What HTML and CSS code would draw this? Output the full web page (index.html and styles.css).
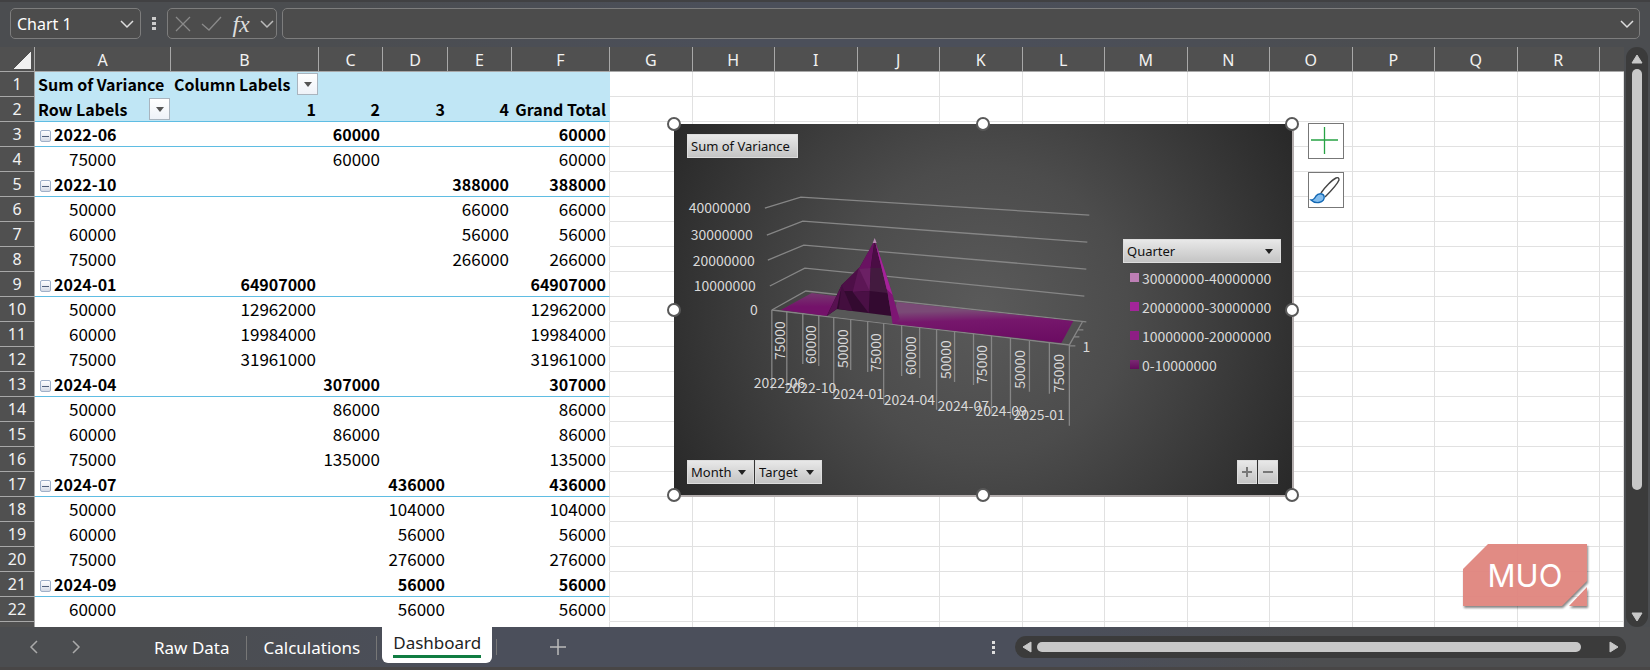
FILE: index.html
```
<!DOCTYPE html>
<html lang="en">
<head>
    <meta charset="UTF-8">
    <meta name="viewport" content="width=device-width, initial-scale=1.0">
    <title>Variance Dashboard</title>
    <link rel="stylesheet" href="styles.css">
</head>
<body>
    <header class="formula-bar">
        <div class="box name-box">
            <input type="text" class="name-input" value="Chart 1" aria-label="Name box">
            <button class="plain" aria-label="Open name list">
                <svg width="16" height="10" viewBox="0 0 16 10"><path d="M2 2l6 6 6-6" fill="none" stroke="#ddd" stroke-width="1.5"/></svg>
            </button>
        </div>
        <svg class="grip" width="4" height="13" viewBox="0 0 4 13" fill="#ccc"><path d="M0 0h4v3H0zM0 5h4v3H0zM0 10h4v3H0z"/></svg>
        <div class="box fx-box">
            <button class="plain" aria-label="Cancel">
                <svg width="16" height="16" viewBox="0 0 16 16"><path d="M1 1l14 14M15 1L1 15" stroke="#8a8a8a" stroke-width="1.3"/></svg>
            </button>
            <button class="plain" aria-label="Enter">
                <svg width="21" height="16" viewBox="0 0 21 16"><path d="M1 8l7 6L20 1" fill="none" stroke="#8a8a8a" stroke-width="1.3"/></svg>
            </button>
            <button class="plain fx" aria-label="Insert function">fx</button>
            <button class="plain" aria-label="Function list">
                <svg width="14" height="10" viewBox="0 0 14 10"><path d="M1 2l6 6 6-6" fill="none" stroke="#bbb" stroke-width="1.5"/></svg>
            </button>
        </div>
        <div class="box formula-box">
            <input type="text" class="formula-input" aria-label="Formula">
            <button class="plain" aria-label="Expand formula bar">
                <svg width="14" height="10" viewBox="0 0 14 10"><path d="M1 2l6 6 6-6" fill="none" stroke="#ddd" stroke-width="1.5"/></svg>
            </button>
        </div>
    </header>

    <main class="workspace">
        <div class="sheet">
            <table class="grid">
                <colgroup>
                    <col class="col-num"><col class="col-a"><col class="col-b"><col class="col-n"><col class="col-d"><col class="col-n"><col class="col-f">
                    <col><col><col><col><col><col><col><col><col><col><col><col><col class="col-last">
                </colgroup>
                <thead>
                    <tr id="columnLetters"></tr>
                </thead>
                <tbody id="gridRows"></tbody>
            </table>

            <!-- Pivot chart floating over the cells -->
            <section class="chart" aria-label="Pivot chart">
                <svg class="plot" viewBox="674 124 619 371">
                    <defs>
                        <linearGradient id="carpet" x1="0" y1="0" x2="0.12" y2="1">
                            <stop offset="0.25" stop-color="#7a4a76"/>
                            <stop offset="0.5" stop-color="#76176c"/>
                            <stop offset="1" stop-color="#6c0d63"/>
                        </linearGradient>
                        <linearGradient id="carpetLeft" x1="0" y1="0" x2="0" y2="1">
                            <stop offset="0" stop-color="#76386f"/>
                            <stop offset="0.6" stop-color="#74126a"/>
                        </linearGradient>
                    </defs>
                    <g class="lines">
                        <path d="M765 208L801 197L1090 215M767 235L803 221L1088 242M768 260L804 245L1087 269M770 286L805 268L1085 296M772 310L806 291L1087 322"/>
                        <path d="M772 310L1070 345L1083 322M1078 330h6M1074 337h6M1070 346h6"/>
                    </g>
                    <path d="M781 310L812 293L842 297L827 316z" fill="url(#carpetLeft)"/>
                    <path d="M893 324L897 302L1074 321L1062 343z" fill="url(#carpet)"/>
                    <path d="M827 316L837 309L892 316L893 324z" fill="#575757"/>
                    <path d="M827 316L842 285L859 269L875 241L882 268L888 293L892 316L837 309z" fill="#330a30"/>
                    <path d="M827 316L842 285L837 309z" fill="#571150"/>
                    <path d="M842 285L859 268L871 268L870 291L839 291z" fill="#4d0f47"/>
                    <path d="M859 268L853 292L870 291L871 268z" fill="#5c1655"/>
                    <path d="M859 268L870 291L871 268z" fill="#6b2064"/>
                    <path d="M859 269L875 240L871 268z" fill="#691261"/>
                    <path d="M875 240L871 268L882 268z" fill="#4a0d44"/>
                    <path d="M871 268L882 268L888 293L870 291z" fill="#431a3f"/>
                    <path d="M842 285L853 311L839 309z" fill="#430e3e"/>
                    <path d="M853 292L869 313L870 291z" fill="#4a1045"/>
                    <path d="M875 240L885 270L893 295L900 319L893 324L888 293L882 268z" fill="#7d1573"/>
                    <path d="M875 240L885 270L893 295L887 289L881 264z" fill="#a5239a"/>
                    <path d="M875 238L877 243H873z" fill="#b58ab1"/>
                    <g class="lines">
                        <path d="M772 310V390M787 312V390M803 314V364M819 316V366M834 317V396M851 319V370M868 321V372M884 323V404M902 325V376M920 328V378M937 330V410M955 332V382M974 334V385M992 336V414M1011 338V419M1030 341V392M1050 343V394M1070 345V426"/>
                    </g>
                    <g class="axis axis-value">
                        <text x="751" y="213">40000000</text>
                        <text x="753" y="240">30000000</text>
                        <text x="755" y="266">20000000</text>
                        <text x="756" y="291">10000000</text>
                        <text x="758" y="315">0</text>
                        <text x="1091" y="352">1</text>
                    </g>
                    <g class="axis" id="targetLabels"></g>
                    <g class="axis">
                        <text x="754" y="388">2022-06</text>
                        <text x="785" y="393">2022-10</text>
                        <text x="833" y="399">2024-01</text>
                        <text x="884" y="405">2024-04</text>
                        <text x="938" y="411">2024-07</text>
                        <text x="976" y="416">2024-09</text>
                        <text x="1014" y="420">2025-01</text>
                    </g>
                </svg>
                <div class="chart-top">
                    <button class="field">Sum of Variance</button>
                </div>
                <div class="legend">
                    <select class="field legend-field" aria-label="Quarter"><option>Quarter</option></select>
                    <ul class="legend-list">
                        <li><span class="swatch s4"></span>30000000-40000000</li>
                        <li><span class="swatch s3"></span>20000000-30000000</li>
                        <li><span class="swatch s2"></span>10000000-20000000</li>
                        <li><span class="swatch s1"></span>0-10000000</li>
                    </ul>
                </div>
                <div class="chart-bottom">
                    <select class="field" aria-label="Month"><option>Month</option></select>
                    <select class="field" aria-label="Target"><option>Target</option></select>
                    <button class="field zoom-field first" aria-label="Expand field">
                        <svg width="10" height="10" viewBox="0 0 10 10"><path d="M0 5h10M5 0v10" stroke="#777" stroke-width="2"/></svg>
                    </button>
                    <button class="field zoom-field" aria-label="Collapse field">
                        <svg width="10" height="10" viewBox="0 0 10 10"><path d="M0 5h10" stroke="#777" stroke-width="2"/></svg>
                    </button>
                </div>
                <span class="handle top left"></span>
                <span class="handle top center"></span>
                <span class="handle top right"></span>
                <span class="handle middle left"></span>
                <span class="handle middle right"></span>
                <span class="handle bottom left"></span>
                <span class="handle bottom center"></span>
                <span class="handle bottom right"></span>
                <div class="chart-tools">
                    <button class="tool" aria-label="Chart elements">
                        <svg width="34" height="34" viewBox="0 0 34 34"><path d="M2 16h27M15.500 3v27" stroke="#27a344" stroke-width="1.3"/></svg>
                    </button>
                    <button class="tool" aria-label="Chart styles">
                        <svg width="34" height="34" viewBox="0 0 34 34">
                            <path d="M12 20C16 14 23 7 27 5c2-1 3 0 3 2c-2 5-8 11-14 17" fill="#fff" stroke="#444" stroke-width="1.4"/>
                            <path d="M2 27c3 0 4-2 5-4c2-3 7-3 8 0c1 3-1 6-5 6.500c-3 .5-6-.5-8-2.500z" fill="#83bdee" stroke="#1368b3" stroke-width="1.4"/>
                        </svg>
                    </button>
                </div>
            </section>

            <div class="watermark">
                <svg class="watermark-shape" viewBox="0 0 124 62"><path d="M0 25L25 0H124V37L99 62H0zM124 43V62H106z" fill="#e0857e"/></svg>
                <span class="watermark-text">MUO</span>
            </div>
        </div>
        <div class="scroll scroll-y">
            <svg width="12" height="10" viewBox="0 0 12 10"><path d="M6 1l5 8H1z" fill="#c8c8c8" stroke="#c8c8c8" stroke-linejoin="round"/></svg>
            <div class="thumb-y"></div>
            <svg width="12" height="10" viewBox="0 0 12 10"><path d="M6 9L1 1h10z" fill="#c8c8c8" stroke="#c8c8c8" stroke-linejoin="round"/></svg>
        </div>
    </main>

    <footer class="tab-bar">
        <div class="tab-arrows">
            <button class="plain" aria-label="Previous sheet">
                <svg width="10" height="14" viewBox="0 0 10 14"><path d="M8 1L2 7l6 6" fill="none" stroke="#aaa" stroke-width="1.5"/></svg>
            </button>
            <button class="plain" aria-label="Next sheet">
                <svg width="10" height="14" viewBox="0 0 10 14"><path d="M2 1l6 6-6 6" fill="none" stroke="#aaa" stroke-width="1.5"/></svg>
            </button>
        </div>
        <nav class="tabs">
            <button class="tab">Raw Data</button>
            <button class="tab">Calculations</button>
            <button class="tab active"><span>Dashboard</span></button>
        </nav>
        <button class="plain add-tab" aria-label="New sheet">
            <svg width="16" height="16" viewBox="0 0 16 16"><path d="M0 8h16M8 0v16" stroke="#bbb" stroke-width="1.5"/></svg>
        </button>
        <svg class="tab-grip" width="3" height="13" viewBox="0 0 3 13" fill="#ddd"><path d="M0 0h3v3H0zM0 5h3v3H0zM0 10h3v3H0z"/></svg>
        <div class="scroll scroll-x">
            <svg width="10" height="12" viewBox="0 0 10 12"><path d="M1 6l8-5v10z" fill="#c8c8c8" stroke="#c8c8c8" stroke-linejoin="round"/></svg>
            <div class="thumb-x"></div>
            <svg width="10" height="12" viewBox="0 0 10 12"><path d="M9 6L1 1v10z" fill="#c8c8c8" stroke="#c8c8c8" stroke-linejoin="round"/></svg>
        </div>
    </footer>

    <script>
        const letters = 'ABCDEFGHIJKLMNOPQR'.split('');

        // label, value, quarter (1-4 = columns B-E); months are the group rows
        const rows = [
            ['2022-06', 60000, 2], ['75000', 60000, 2],
            ['2022-10', 388000, 4], ['50000', 66000, 4], ['60000', 56000, 4], ['75000', 266000, 4],
            ['2024-01', 64907000, 1], ['50000', 12962000, 1], ['60000', 19984000, 1], ['75000', 31961000, 1],
            ['2024-04', 307000, 2], ['50000', 86000, 2], ['60000', 86000, 2], ['75000', 135000, 2],
            ['2024-07', 436000, 3], ['50000', 104000, 3], ['60000', 56000, 3], ['75000', 276000, 3],
            ['2024-09', 56000, 3], ['60000', 56000, 3]
        ];

        const emptyCells = '<td></td>'.repeat(13);
        const filterButton = name => `<button class="filter" aria-label="Filter ${name}"></button>`;

        document.getElementById('columnLetters').innerHTML =
            '<th class="corner"></th>' + letters.map(l => `<th>${l}</th>`).join('') + '<th></th>';

        let html = `
            <tr class="head"><th>1</th><td class="pivot label">Sum of Variance</td><td class="pivot label"><div class="with-filter">Column Labels${filterButton('columns')}</div></td><td class="pivot"></td><td class="pivot"></td><td class="pivot"></td><td class="pivot last"></td>${emptyCells}</tr>
            <tr class="head group"><th>2</th><td class="pivot label"><div class="with-filter">Row Labels${filterButton('rows')}</div></td><td class="pivot">1</td><td class="pivot">2</td><td class="pivot">3</td><td class="pivot">4</td><td class="pivot last">Grand Total</td>${emptyCells}</tr>`;

        rows.forEach(([label, value, quarter], i) => {
            const isGroup = label.includes('-');
            const toggle = isGroup ? '<button class="toggle" aria-label="Collapse"></button>' : '';
            let cells = '';
            for (let q = 1; q <= 4; q++) {
                cells += `<td class="pivot">${q === quarter ? value : ''}</td>`;
            }
            html += `<tr class="${isGroup ? 'group' : 'item'}"><th>${i + 3}</th><td class="pivot label">${toggle}${label}</td>${cells}<td class="pivot last">${value}</td>${emptyCells}</tr>`;
        });
        html += `<tr><th></th>${'<td class="pivot"></td>'.repeat(5)}<td class="pivot last"></td>${emptyCells}</tr>`;
        document.getElementById('gridRows').innerHTML = html;

        const targets = [
            [785, 360, '75000'], [816, 364, '60000'], [848, 368, '50000'], [881, 372, '75000'], [916, 375, '60000'],
            [951, 379, '50000'], [988, 384, '75000'], [1026, 389, '50000'], [1065, 393, '75000']
        ];
        document.getElementById('targetLabels').innerHTML =
            targets.map(([x, y, t]) => `<text transform="translate(${x} ${y}) rotate(-90)">${t}</text>`).join('');
    </script>
</body>
</html>
```
FILE: styles.css
```
/* General */
* {
    box-sizing: border-box;
}
body {
    margin: 0;
    height: 100vh;
    display: flex;
    flex-direction: column;
    overflow: hidden;
    background: #4b4d50;
    font-family: "Noto Sans CJK SC", "Noto Sans", sans-serif;
    font-size: 17px;
}
button, input, select {
    font: inherit;
    color: inherit;
    margin: 0;
    padding: 0;
    border: none;
    background: none;
    outline: none;
}
svg {
    display: block;
}
.plain {
    flex: none;
    cursor: pointer;
}

/* Formula bar */
.formula-bar {
    flex: none;
    height: 47px;
    padding: 6px 10px 8px;
    display: flex;
    align-items: center;
    background: linear-gradient(90deg, #4b4d50 20%, #4b4f5a 45%, #4b4f5a 60%, #4b4d50 85%);
    border-top: 2px solid #414143;
    color: #fff;
}
.box {
    height: 31px;
    display: flex;
    align-items: center;
    border: 1px solid #7d7d7d;
    border-radius: 5px;
    background: #4c4c4c;
}
.name-box {
    width: 131px;
    padding: 0 5px 0 6px;
}
.name-input {
    flex: 1;
    min-width: 0;
    font-family: "Noto Sans", sans-serif;
    font-size: 16px;
}
.grip {
    margin: 0 11px;
}
.fx-box {
    width: 110px;
    padding: 0 2px 0 7px;
    justify-content: space-between;
}
.fx {
    font-family: "Liberation Serif", serif;
    font-style: italic;
    font-size: 24px;
    line-height: 26px;
    color: #ddd;
}
.formula-box {
    flex: 1;
    margin-left: 5px;
    padding: 0 5px;
}
.formula-input {
    flex: 1;
}

/* Sheet */
.workspace {
    flex: 1;
    min-height: 0;
    display: flex;
}
.sheet {
    position: relative;
    flex: 1;
    overflow: hidden;
    background: #fff;
}
.grid {
    width: 100%;
    table-layout: fixed;
    border-collapse: separate;
    border-spacing: 0;
    line-height: 24px;
}
.col-num { width: 35px; }
.col-a { width: 136px; }
.col-b { width: 148px; }
.col-n { width: 64px; }
.col-d { width: 65px; }
.col-f { width: 98px; }
.col-last { width: 24px; }
.grid th {
    padding: 0;
    background: #505050;
    color: #f2f2f2;
    font-family: "Noto Sans", sans-serif;
    font-size: 16px;
    font-weight: normal;
    border-right: 1px solid #a8a8a8;
    border-bottom: 1px solid #a8a8a8;
}
.grid thead th {
    height: 25px;
    padding-top: 2px;
    line-height: 22px;
}
.grid thead th:last-child {
    border-right: none;
}
.grid .corner {
    background: linear-gradient(135deg, #505050 50%, #f0f0f0 50%) 13px 4px / 18px 18px no-repeat #505050;
}
.grid td {
    height: 25px;
    padding: 0 3px;
    border-right: 1px solid #e1e1e1;
    border-bottom: 1px solid #e1e1e1;
    text-align: right;
    white-space: nowrap;
}
.grid .pivot {
    border-right: none;
    border-bottom-color: #fff;
}
.grid .last {
    border-right: 1px solid #e1e1e1;
}
.grid .label {
    text-align: left;
}
.head td.pivot {
    background: #c0e6f5;
    border-color: #c0e6f5;
}
.head td, .group td {
    font-size: 16px;
    font-weight: bold;
}
.group td.pivot {
    border-bottom-color: #5fbde3;
}
.item .label {
    padding-left: 34px;
}
.group:not(.head) .label {
    padding-left: 5px;
}
.with-filter {
    display: flex;
    align-items: center;
    justify-content: space-between;
    margin-right: -2px;
}
.filter {
    width: 21px;
    height: 22px;
    border: 1px solid #a9b4be;
    background: linear-gradient(#fff, #eef2f8);
    display: flex;
    align-items: center;
    justify-content: center;
}
.filter::after {
    content: "";
    border: 4px solid transparent;
    border-top: 5px solid #555;
    border-bottom: none;
}
.toggle {
    width: 11px;
    height: 12px;
    margin-right: 3px;
    border: 1px solid #9fb0c8;
    border-radius: 2px;
    background: linear-gradient(#51617c, #51617c) center / 7px 1px no-repeat, linear-gradient(#fff, #d5dbe6);
}

/* Chart */
.chart {
    position: absolute;
    left: 674px;
    top: 77px;
    width: 618px;
    height: 371px;
    padding: 10px 14px 11px 13px;
    display: flex;
    flex-direction: column;
    justify-content: space-between;
    background: radial-gradient(circle at 50% 50%, #5a5a5a 0%, #4c4c4c 40%, #282828 100%);
    box-shadow: 1px 1px 0 1px #b3adad;
    font-size: 14px;
    color: #d9d9d9;
}
.plot {
    position: absolute;
    inset: 0;
    width: 100%;
    height: 100%;
}
.lines path {
    fill: none;
    stroke: #868686;
    stroke-width: 1.3;
}
.axis {
    fill: #d9d9d9;
    font-size: 14px;
}
.axis-value {
    text-anchor: end;
}
.chart-top, .chart-bottom {
    position: relative;
    display: flex;
    gap: 1px;
}
.field {
    height: 24px;
    padding: 0 3px;
    border: 1px solid #ddd;
    background: linear-gradient(#e8e8e8, #c4c4c4);
    color: #111;
    font-family: "Noto Sans", sans-serif;
    font-size: 13px;
    line-height: 20px;
}
.chart-top .field {
    width: 111px;
    text-align: left;
    white-space: nowrap;
}
select.field {
    width: 67px;
    appearance: none;
    background: url("data:image/svg+xml,%3Csvg xmlns='http://www.w3.org/2000/svg' width='8' height='5'%3E%3Cpath d='M0 0h8L4 5z' fill='%23222'/%3E%3C/svg%3E") right 7px center no-repeat, linear-gradient(#e8e8e8, #c4c4c4);
}
.legend {
    position: absolute;
    right: 11px;
    top: 115px;
    width: 158px;
}
.legend .legend-field {
    display: block;
    width: 100%;
}
.legend-list {
    list-style: none;
    margin: 0;
    padding: 0 0 0 7px;
}
.legend-list li {
    display: flex;
    align-items: center;
    gap: 3px;
    height: 29px;
    white-space: nowrap;
}
.swatch {
    width: 9px;
    height: 9px;
}
.s4 { background: #bd7fb5; }
.s3 { background: #a3259a; }
.s2 { background: #8e1e85; }
.s1 { background: linear-gradient(#7a2a73, #640b5c); }
.zoom-field {
    width: 20px;
    display: flex;
    align-items: center;
    justify-content: center;
}
.zoom-field.first {
    margin-left: auto;
}
.handle {
    position: absolute;
    width: 14px;
    height: 14px;
    border: 2px solid #595959;
    border-radius: 50%;
    background: #fff;
    transform: translate(-50%, -50%);
}
.handle.top { top: 0; }
.handle.middle { top: 50%; }
.handle.bottom { top: 100%; }
.handle.left { left: 0; }
.handle.center { left: 50%; }
.handle.right { left: 100%; }
.chart-tools {
    position: absolute;
    left: 100%;
    top: -1px;
    margin-left: 16px;
    display: grid;
    gap: 13px;
}
.tool {
    width: 36px;
    height: 36px;
    border: 1px solid #777;
    background: #fff;
}

/* Watermark */
.watermark {
    position: absolute;
    right: 37px;
    bottom: 21px;
    width: 124px;
    height: 62px;
    display: flex;
    align-items: center;
    justify-content: center;
}
.watermark-shape {
    position: absolute;
    inset: 0;
    opacity: 0.95;
    filter: drop-shadow(1px 2px 1px rgba(0, 0, 0, 0.5));
}
.watermark-text {
    position: relative;
    font-family: Inter, sans-serif;
    font-size: 31px;
    font-weight: 400;
    color: #fff;
}

/* Scrollbars */
.scroll {
    background: #3b3b3b;
    border-radius: 11px;
    display: flex;
    align-items: center;
}
.scroll-y {
    flex: none;
    width: 22px;
    margin: 0 2px;
    padding: 7px 0 5px;
    flex-direction: column;
    justify-content: space-between;
}
.thumb-y {
    width: 10px;
    flex: 1;
    margin: 5px 0 122px;
    border-radius: 5px;
    background: #c8c8c8;
}
.scroll-x {
    flex: none;
    width: 611px;
    height: 22px;
    padding: 0 7px;
}
.thumb-x {
    flex: 1;
    height: 10px;
    margin: 0 28px 0 5px;
    border-radius: 5px;
    background: #c8c8c8;
}

/* Sheet tabs */
.tab-bar {
    flex: none;
    height: 43px;
    padding: 0 24px 0 29px;
    display: flex;
    align-items: center;
    background: linear-gradient(90deg, #4b4d50 10%, #4b4f5b 28%, #4b4f5b 65%, #4d4e50 80%);
    border-bottom: 3px solid #484646;
    color: #fff;
    font-family: "Noto Sans", sans-serif;
}
.tab-arrows {
    display: flex;
    gap: 32px;
}
.tabs {
    display: flex;
    align-self: stretch;
    margin-left: 56px;
}
.tab {
    height: 36px;
    padding: 6px 17px 0;
    position: relative;
    line-height: 28px;
}
.tab:not(.active)::after {
    content: "";
    position: absolute;
    right: 0;
    top: 9px;
    height: 24px;
    border-right: 1px solid #777;
}
.tab.active {
    margin-left: 5px;
    padding: 4px 11px 5px;
    border-radius: 0 0 6px 6px;
    background: #fff;
    color: #222;
}
.tab.active span {
    display: block;
    line-height: 24px;
    border-bottom: 3px solid #107c41;
}
.add-tab {
    margin: 0 auto 0 4px;
    padding-left: 54px;
    background: linear-gradient(#777, #777) left center / 1px 100% no-repeat;
}
.tab-grip {
    margin-right: 20px;
}
```
